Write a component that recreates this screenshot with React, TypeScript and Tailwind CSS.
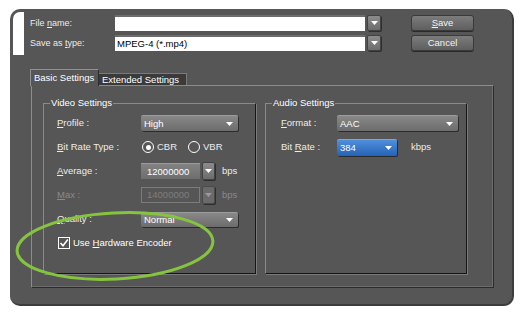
import React from "react";

const Tri = ({ color = "#ffffff" }: { color?: string }) => (
  <svg width="7" height="4" viewBox="0 0 7 4">
    <polygon points="0,0 7,0 3.5,4" fill={color} />
  </svg>
);

const U = ({ children }: { children: React.ReactNode }) => <span className="underline underline-offset-[1px]">{children}</span>;

const Select = ({ text, w, h = 16, blue = false }: { text: string; w: string; h?: number; blue?: boolean }) => (
  <div
    className={
      (blue
        ? "bg-linear-to-b from-[#4f8fdc] to-[#2462b6] border-t border-[#74a9e8] "
        : "bg-linear-to-b from-[#888888] to-[#6c6c6c] border-t border-[#9c9c9c] ") +
      w +
      " flex items-center justify-between rounded-[2px] shadow-[1px_1px_0_#2c2c2c] pl-[3px] pr-[5px] text-white " +
      (h === 17 ? "h-[17px]" : h === 15 ? "h-[15px]" : "h-[16px]")
    }
  >
    <span>{text}</span>
    <Tri />
  </div>
);

const DropBtn = ({ disabled = false, tall = false }: { disabled?: boolean; tall?: boolean }) => (
  <div
    className={
      (disabled ? "bg-[#6a6a6a] border-[#4a4a4a] " : "bg-linear-to-b from-[#8c8c8c] to-[#6c6c6c] border-[#424242] ") +
      (tall ? "h-[18px] w-[13px] " : "h-[16px] w-[14px] ") +
      "flex items-center justify-center border rounded-[2px] shadow-[1px_1px_0_#2e2e2e]"
    }
  >
    <Tri color={disabled ? "#9a9a9a" : "#ffffff"} />
  </div>
);

const Row = ({ children }: { children: React.ReactNode }) => <div className="flex items-center h-[24px]">{children}</div>;

export default function App() {
  return (
    <div className="relative w-[523px] h-[312px] bg-white pt-[9px] pl-[10px] font-['Liberation_Sans',Arial,sans-serif] text-[9.5px] leading-[12px] text-[#ececec]">
      <div className="w-[504px] h-[297px] bg-[#565656] rounded-[10px] border-r-2 border-b-2 border-[#3c3c3c] pt-[3px] pl-[3px]">
        {/* top section */}
        <div className="flex">
          <div className="w-[11px] h-[43px] bg-white rounded-tl-[7px]" />
          <div className="ml-[6px] pt-[3px] flex flex-col gap-[4px] text-[9px]">
            <div className="flex items-center h-[16px]">
              <div className="w-[85px]">
                File <U>n</U>ame:
              </div>
              <div className="w-[250px] h-[16px] bg-white border-t-2 border-[#6d6d6d]" />
              <div className="ml-[2px]">
                <DropBtn />
              </div>
              <div className="ml-[30px] w-[63px] h-[16px] flex items-center justify-center rounded-[3px] border border-[#3a3a3a] bg-linear-to-b from-[#7c7c7c] to-[#5f5f5f] shadow-[0_1px_0_#2a2a2a] text-[9.5px] text-[#f2f2f2]">
                <U>S</U>ave
              </div>
            </div>
            <div className="flex items-center h-[16px]">
              <div className="w-[85px]">
                Save as <U>t</U>ype:
              </div>
              <div className="w-[250px] h-[16px] bg-white border-t-2 border-[#6d6d6d] pl-[2px] text-black text-[9.5px] leading-[13px]">
                MPEG-4 (*.mp4)
              </div>
              <div className="ml-[2px]">
                <DropBtn />
              </div>
              <div className="ml-[30px] w-[63px] h-[16px] flex items-center justify-center rounded-[3px] border border-[#3a3a3a] bg-linear-to-b from-[#7c7c7c] to-[#5f5f5f] shadow-[0_1px_0_#2a2a2a] text-[9.5px] text-[#f2f2f2]">
                Cancel
              </div>
            </div>
          </div>
        </div>

        {/* tabs */}
        <div className="mt-[14px] ml-[17px] flex items-end">
          <div className="relative z-10 -mb-px h-[17px] w-[69px] bg-[#565656] border-t border-l border-[#909090] border-r border-r-[#2e2e2e] pl-[3px] pt-[2px] text-white">
            Basic Settings
          </div>
          <div className="h-[12px] w-[88px] bg-[#3a3a3a] border-t border-r border-[#7a7a7a] pl-[3px] leading-[11px] text-white">
            Extended Settings
          </div>
        </div>

        {/* tab content */}
        <div className="ml-[18px] w-[463px] h-[203px] border border-t-[#8c8c8c] border-l-[#8c8c8c] border-r-[#2c2c2c] border-b-[#2c2c2c] shadow-[inset_-1px_-1px_0_#6c6c6c] pt-[17px] pl-[11px] flex gap-[9px]">
          {/* Video */}
          <div className="relative w-[213px] h-[171px] border border-t-[#8a8a8a] border-l-[#8a8a8a] border-r-[#151515] border-b-[#151515] shadow-[1px_1px_0_#7a7a7a] pt-[7px]">
            <div className="absolute -top-[7px] left-[6px] px-[1px] bg-[#565656] text-white">Video Settings</div>
            <Row>
              <div className="pl-[13px] w-[97px]">
                <U>P</U>rofile :
              </div>
              <Select text="High" w="w-[97px]" />
            </Row>
            <Row>
              <div className="pl-[13px] w-[97px]">
                <U>B</U>it Rate Type :
              </div>
              <div className="flex items-center w-[47px] pl-[1px]">
                <div className="w-[12px] h-[12px] rounded-full border-[1.5px] border-white flex items-center justify-center">
                  <div className="w-[5px] h-[5px] rounded-full bg-white" />
                </div>
                <span className="ml-[3px]">CBR</span>
              </div>
              <div className="flex items-center">
                <div className="w-[12px] h-[12px] rounded-full border-[1.5px] border-white" />
                <span className="ml-[3px]">VBR</span>
              </div>
            </Row>
            <Row>
              <div className="pl-[13px] w-[97px]">
                <U>A</U>verage :
              </div>
              <div className="w-[59px] h-[16px] bg-linear-to-b from-[#828282] to-[#6e6e6e] border-t border-[#9a9a9a] pl-[6px] leading-[15px] text-white">
                12000000
              </div>
              <div className="ml-[2px]">
                <DropBtn tall />
              </div>
              <span className="ml-[7px]">bps</span>
            </Row>
            <Row>
              <div className="pl-[13px] w-[97px] text-[#8a8a8a]">
                <U>M</U>ax :
              </div>
              <div className="w-[59px] h-[16px] border border-[#7c7c7c] pl-[5px] leading-[14px] text-[#7e7e7e]">
                14000000
              </div>
              <div className="ml-[2px]">
                <DropBtn tall disabled />
              </div>
              <span className="ml-[7px] text-[#8a8a8a]">bps</span>
            </Row>
            <Row>
              <div className="pl-[13px] w-[97px]">
                <U>Q</U>uality :
              </div>
              <Select text="Normal" w="w-[97px]" h={15} />
            </Row>
            <Row>
              <div className="pl-[14px] flex items-center">
                <div className="w-[12px] h-[12px] border border-white flex items-center justify-center">
                  <svg width="10" height="10" viewBox="0 0 10 10">
                    <polyline points="1.5,5 4,7.8 8.8,1.5" fill="none" stroke="#ffffff" strokeWidth="1.6" />
                  </svg>
                </div>
                <span className="ml-[3px] text-white">
                  Use <U>H</U>ardware Encoder
                </span>
              </div>
            </Row>
          </div>

          {/* Audio */}
          <div className="relative w-[202px] h-[171px] border border-t-[#8a8a8a] border-l-[#8a8a8a] border-r-[#151515] border-b-[#151515] shadow-[1px_1px_0_#7a7a7a] pt-[7px]">
            <div className="absolute -top-[7px] left-[6px] px-[1px] bg-[#565656] text-white">Audio Settings</div>
            <Row>
              <div className="pl-[15px] w-[71px]">
                <U>F</U>ormat :
              </div>
              <Select text="AAC" w="w-[121px]" />
            </Row>
            <Row>
              <div className="pl-[15px] w-[71px]">
                Bit <U>R</U>ate :
              </div>
              <Select text="384" w="w-[60px]" h={17} blue />
              <span className="ml-[14px]">kbps</span>
            </Row>
          </div>
        </div>
      </div>

      {/* green highlight ellipse */}
      <svg className="absolute left-0 top-0 pointer-events-none" width="523" height="312" viewBox="0 0 523 312">
        <ellipse cx="115" cy="246" rx="98" ry="33" transform="rotate(-3 115 246)" fill="none" stroke="#86c440" strokeWidth="3" />
      </svg>
    </div>
  );
}
